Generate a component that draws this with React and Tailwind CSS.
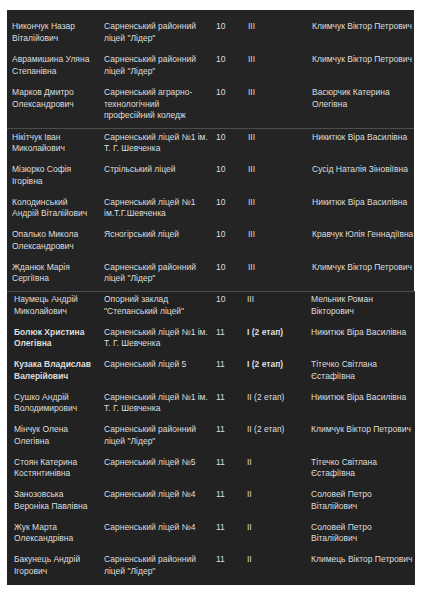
import React from "react";

const s1 = [
  [["Никончук Назар", "Віталійович"], ["Сарненський районний", "ліцей \"Лідер\""], "10", "III", ["Климчук Віктор Петрович"]],
  [["Аврамишина Уляна", "Степанівна"], ["Сарненський районний", "ліцей \"Лідер\""], "10", "III", ["Климчук Віктор Петрович"]],
  [["Марков Дмитро", "Олександрович"], ["Сарненський аграрно-", "технологічний", "професійний коледж"], "10", "III", ["Васюрчик Катерина", "Олегівна"]],
];

const s2 = [
  [["Нікітчук Іван", "Миколайович"], ["Сарненський ліцей №1 ім.", "Т. Г. Шевченка"], "10", "III", ["Никитюк Віра Василівна"]],
  [["Мізюрко Софія", "Ігорівна"], ["Стрільський ліцей"], "10", "III", ["Сусід Наталія Зіновіївна"]],
  [["Колодинський", "Андрій Віталійович"], ["Сарненський ліцей №1", "ім.Т.Г.Шевченка"], "10", "III", ["Никитюк Віра Василівна"]],
  [["Опалько Микола", "Олександрович"], ["Ясногірський ліцей"], "10", "III", ["Кравчук Юлія Геннадіївна"]],
  [["Жданюк Марія", "Сергіївна"], ["Сарненський районний", "ліцей \"Лідер\""], "10", "III", ["Климчук Віктор Петрович"]],
];

const s3 = [
  [["Наумець Андрій", "Миколайович"], ["Опорний заклад", "\"Степанський ліцей\""], "10", "III", ["Мельник Роман", "Вікторович"]],
  [["Болюк Христина", "Олегівна"], ["Сарненський ліцей №1 ім.", "Т. Г. Шевченка"], "11", "I (2 етап)", ["Никитюк Віра Василівна"], true],
  [["Кузака Владислав", "Валерійович"], ["Сарненський ліцей 5"], "11", "I (2 етап)", ["Тітечко Світлана", "Єстафіївна"], true],
  [["Сушко Андрій", "Володимирович"], ["Сарненський ліцей №1 ім.", "Т. Г. Шевченка"], "11", "II (2 етап)", ["Никитюк Віра Василівна"]],
  [["Мінчук Олена", "Олегівна"], ["Сарненський районний", "ліцей \"Лідер\""], "11", "II (2 етап)", ["Климчук Віктор Петрович"]],
  [["Стоян Катерина", "Костянтинівна"], ["Сарненський ліцей №5"], "11", "II", ["Тітечко Світлана", "Єстафіївна"]],
  [["Занозовська", "Вероніка Павлівна"], ["Сарненський ліцей №4"], "11", "II", ["Соловей Петро", "Віталійович"]],
  [["Жук Марта", "Олександрівна"], ["Сарненський ліцей №4"], "11", "II", ["Соловей Петро", "Віталійович"]],
  [["Бакунець Андрій", "Ігорович"], ["Сарненський районний", "ліцей \"Лідер\""], "11", "II", ["Климець Віктор Петрович"]],
];

function Lines({ lines, bold }) {
  return (
    <div className={bold ? "font-bold" : ""}>
      {lines.map((l, i) => (
        <div key={i} className="whitespace-nowrap">{l}</div>
      ))}
    </div>
  );
}

function Row({ r, grid, pad }) {
  const bold = !!r[5];
  return (
    <div className={`grid ${grid} ${pad}`}>
      <Lines lines={r[0]} bold={bold} />
      <Lines lines={r[1]} />
      <div>{r[2]}</div>
      <div className={bold ? "font-bold whitespace-nowrap" : "whitespace-nowrap"}>{r[3]}</div>
      <Lines lines={r[4]} />
    </div>
  );
}

export default function App() {
  const gridA = "grid-cols-[92px_112px_32px_64px_1fr]";
  const gridB = "grid-cols-[90px_112px_31px_64px_1fr]";
  return (
    <div
      className="w-[423px] h-[590px] bg-white pt-[10px] text-[8.5px] leading-[11.5px] text-[#dedede]"
      style={{ fontFamily: '"Liberation Sans", Arial, sans-serif' }}
    >
      <div className="ml-[7px] w-[407px] bg-[#242424] pt-[7px] pl-[5px]">
        {s1.map((r, i) => (
          <Row key={i} r={r} grid={gridA} pad="pt-[4px] pb-[6px]" />
        ))}
      </div>
      <div className="ml-[7px] w-[407px] bg-[#242424] border-t border-[#4d4d4d] pl-[5px]">
        {s2.map((r, i) => (
          <Row key={i} r={r} grid={gridA} pad="pt-[3px] pb-[6.5px]" />
        ))}
      </div>
      <div className="ml-[7px] w-[408px] bg-[#222222] border-t border-[#4d4d4d] pl-[7px]">
        {s3.map((r, i) => (
          <Row key={i} r={r} grid={gridB} pad="pt-[2px] pb-[7.5px]" />
        ))}
      </div>
    </div>
  );
}
